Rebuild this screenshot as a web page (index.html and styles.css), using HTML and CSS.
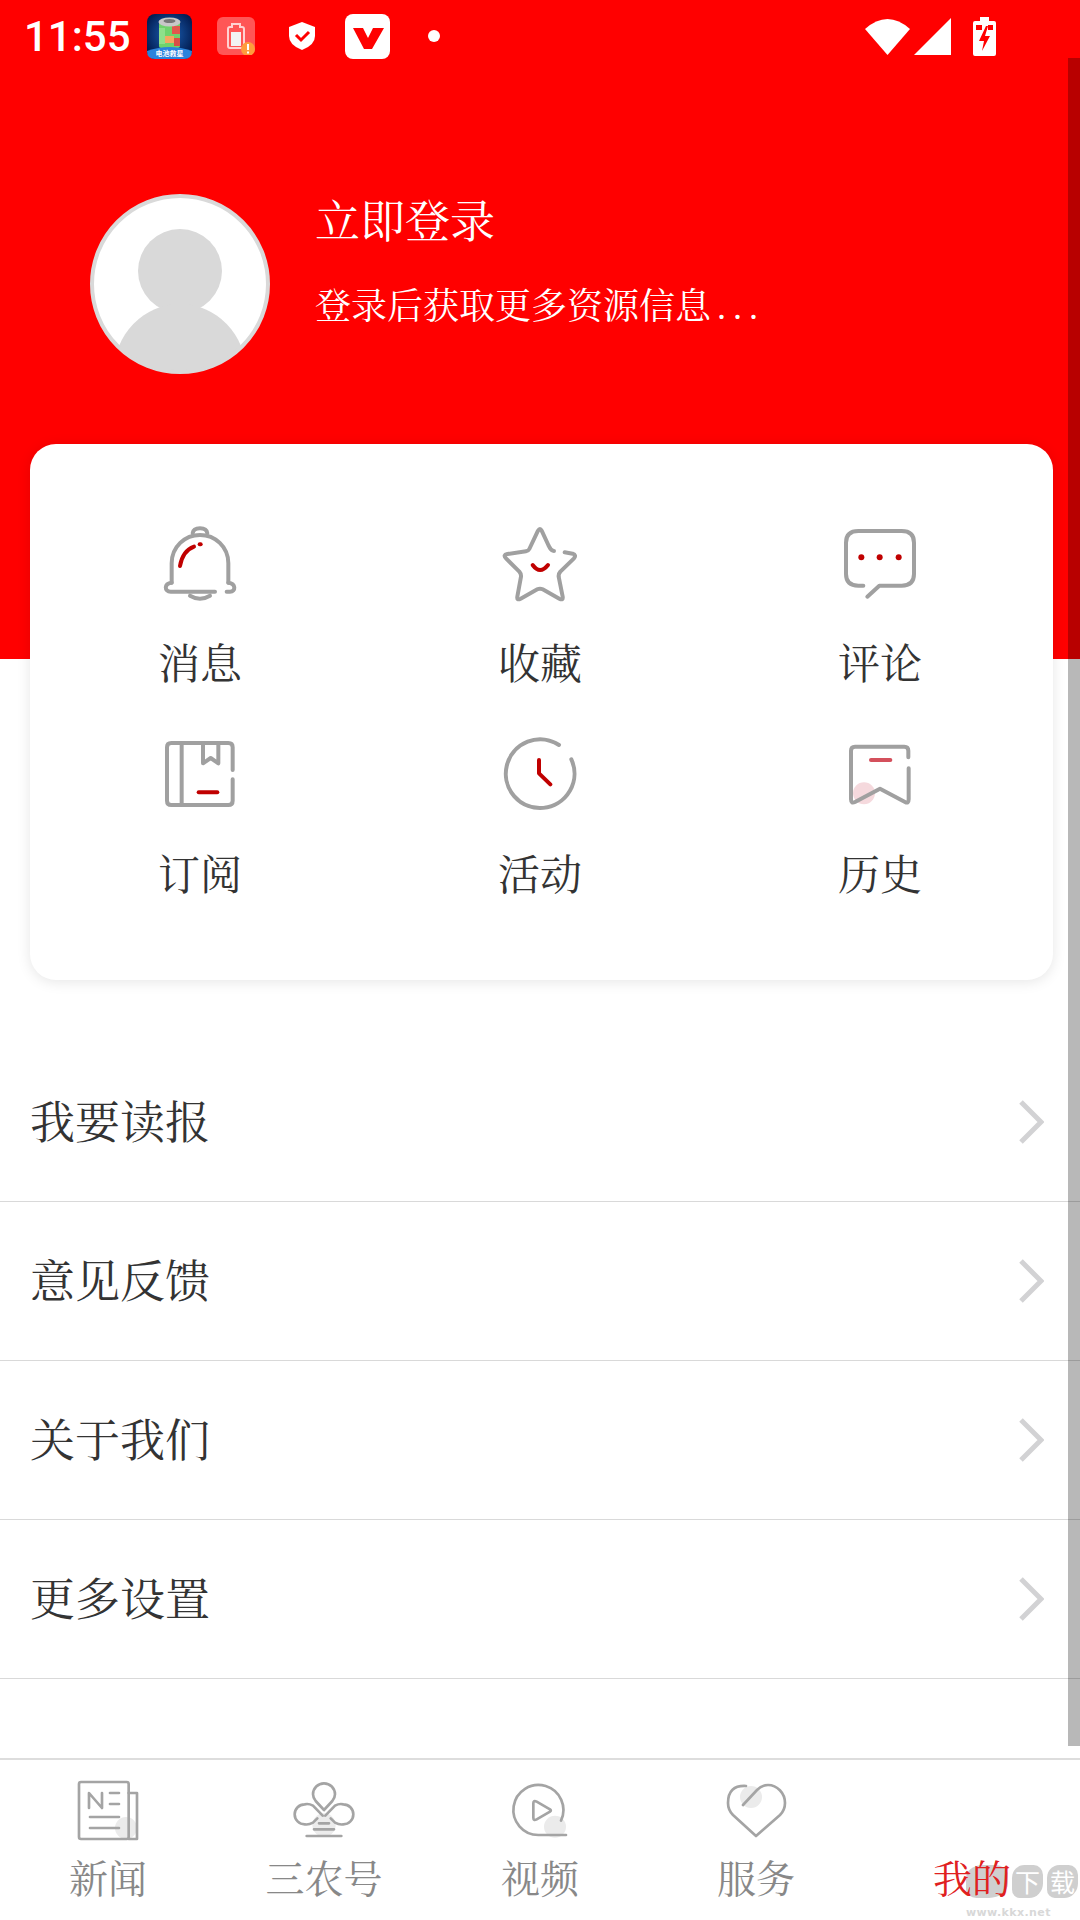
FILE: index.html
```html
<!DOCTYPE html>
<html lang="zh-CN">
<head>
  <meta charset="UTF-8">
  <meta name="viewport" content="width=device-width, initial-scale=1.0">
  <title>我的</title>
  <link rel="stylesheet" href="styles.css">
</head>
<body>
  <div class="page">
    <div class="header">
      <div class="status-bar">
        <span class="time">11:55</span>
        <svg class="st-app" viewBox="0 0 45 45">
          <defs>
            <radialGradient id="appbg" cx="50%" cy="45%" r="60%">
              <stop offset="0" stop-color="#1b62b8"/>
              <stop offset="1" stop-color="#021a4e"/>
            </radialGradient>
          </defs>
          <rect width="45" height="45" rx="8" fill="url(#appbg)"/>
          <rect x="12" y="8" width="21" height="26" rx="2" fill="#6fd36c"/>
          <rect x="25" y="12" width="8" height="8" fill="#e2574c"/>
          <rect x="18" y="22" width="9" height="7" fill="#f4a860"/>
          <rect x="12" y="14" width="6" height="16" fill="#8fe08a"/>
          <rect x="27" y="24" width="6" height="8" fill="#d94f45"/>
          <ellipse cx="22.5" cy="8" rx="11" ry="4.5" fill="#c8c8c8"/>
          <ellipse cx="22.5" cy="7" rx="6" ry="2" fill="#777"/>
          <path d="M0 37 Q22.5 29 45 37 Q45 45 37 45 H8 Q0 45 0 37Z" fill="#2b83dc"/>
          <text x="22.5" y="41.5" class="app-text">电池救星</text>
        </svg>
        <svg class="st-warn" viewBox="0 0 38 38">
          <rect width="38" height="38" rx="6" fill="#ff5656"/>
          <path d="M15 7 V10 H13 Q11 10 11 12 V29 Q11 31 13 31 H25 Q27 31 27 29 V12 Q27 10 25 10 H23 V7Z" fill="none" stroke="#ffd2d2" stroke-width="2"/>
          <rect x="14" y="15" width="10" height="14" fill="#f2f2f2"/>
          <circle cx="31" cy="32" r="7" fill="#ff9c3c"/>
          <rect x="30" y="27" width="2" height="6" fill="#fff"/>
          <rect x="30" y="34.500" width="2" height="2" fill="#fff"/>
        </svg>
        <svg class="st-shield" viewBox="0 0 26 28">
          <path d="M13 0 L26 5 V14 Q26 23 13 28 Q0 23 0 14 V5Z" fill="#fff"/>
          <path d="M7 13 L12 18 L20 10" fill="none" stroke="#f00" stroke-width="3"/>
        </svg>
        <svg class="st-vlogo" viewBox="0 0 45 45">
          <rect width="45" height="45" rx="8" fill="#fff"/>
          <path d="M8 14 H18 L23 24 L28 14 H39 L27 35 H19Z" fill="#f00"/>
        </svg>
        <span class="st-dot"></span>
        <div class="status-right">
          <svg class="st-wifi" viewBox="0 0 45 38">
            <path d="M0 12 Q22.500 -8 45 12 L22.500 38Z" fill="#fff"/>
          </svg>
          <svg class="st-signal" viewBox="0 0 37 37">
            <path d="M37 0 V37 H0Z" fill="#fff"/>
          </svg>
          <svg class="st-battery" viewBox="0 0 23 39">
            <path d="M7 0 H16 V4 H21 Q23 4 23 6 V37 Q23 39 21 39 H2 Q0 39 0 37 V6 Q0 4 2 4 H7Z" fill="#fff"/>
            <path d="M13 9 L6 24 H11 L9 34 L17 19 H12 L15 9Z" fill="#f00"/>
            <rect x="3" y="8" width="6" height="5" fill="#f00"/>
            <rect x="15" y="8" width="5" height="5" fill="#f00"/>
          </svg>
        </div>
      </div>
      <div class="profile">
        <svg class="avatar" viewBox="0 0 180 180">
          <defs>
            <clipPath id="avaclip"><circle cx="90" cy="90" r="88"/></clipPath>
          </defs>
          <circle cx="90" cy="90" r="88" fill="#fff"/>
          <g clip-path="url(#avaclip)" fill="#d9d9d9">
            <circle cx="90" cy="77" r="42"/>
            <ellipse cx="90" cy="178" rx="66" ry="68"/>
          </g>
          <circle cx="90" cy="90" r="88" fill="none" stroke="#d9d9d9" stroke-width="4"/>
        </svg>
        <div class="profile-text">
          <div class="login-title">立即登录</div>
          <div class="login-sub">登录后获取更多资源信息<span class="dots">...</span></div>
        </div>
      </div>
    </div>

    <div class="card">
      <div class="cell">
        <svg class="cell-icon" viewBox="180 75 240 240">
          <g class="ln">
            <path d="M278 100 Q280 85 300 85 Q320 85 322 100"/>
            <path d="M215 248 V190 C215 140 255 105 300 105 C345 105 385 140 385 190 V248"/>
            <path d="M345 275 H212 C192 275 192 250 215 248"/>
            <path d="M380 275 H390 C408 275 408 250 385 248"/>
            <path d="M270 287 Q300 305 330 287"/>
          </g>
          <g class="ln-red">
            <path d="M240 198 C245 170 260 148 282 140"/>
            <path d="M299 133 H302"/>
          </g>
        </svg>
        <div class="cell-label">消息</div>
      </div>
      <div class="cell">
        <svg class="cell-icon" viewBox="1200 75 240 240">
          <path class="ln" d="M1362 153 C1352 153 1350 145 1345 135 L1325 92 Q1320 82 1314 92 L1288 147 Q1285 153 1278 154 L1222 162 Q1208 165 1218 175 L1258 215 Q1264 222 1263 230 L1252 290 Q1250 302 1262 296 L1312 268 Q1320 264 1328 268 L1378 296 Q1390 302 1388 290 L1376 230 Q1375 222 1381 215 L1422 175 Q1430 165 1418 161 L1394 157"/>
          <path class="ln-red" d="M1298 195 Q1320 225 1344 195"/>
        </svg>
        <div class="cell-label">收藏</div>
      </div>
      <div class="cell">
        <svg class="cell-icon" viewBox="780 75 240 240">
          <path class="ln" d="M850 257 H835 Q798 257 798 222 V128 Q798 93 835 93 H965 Q1002 93 1002 128 V222 Q1002 257 965 257 H898 L862 290"/>
          <g class="dot-red">
            <circle cx="844" cy="172" r="9"/>
            <circle cx="899" cy="172" r="9"/>
            <circle cx="956" cy="172" r="9"/>
          </g>
        </svg>
        <div class="cell-label">评论</div>
      </div>
      <div class="cell">
        <svg class="cell-icon" viewBox="180 708 240 240">
          <g class="ln">
            <path d="M398 810 V742 Q398 729 385 729 H214 Q201 729 201 742 V902 Q201 915 214 915 H385 Q398 915 398 902 V838"/>
            <path d="M245 729 V915"/>
            <path d="M309 729 V790 L332 774 L355 790 V729"/>
          </g>
          <path class="ln-red" d="M296 877 H352"/>
        </svg>
        <div class="cell-label">订阅</div>
      </div>
      <div class="cell">
        <svg class="cell-icon" viewBox="1203 708 240 240">
          <path class="ln" d="M1380 735 A103 103 0 1 0 1417 778"/>
          <path class="ln-red" d="M1320 780 V820 L1354 853"/>
        </svg>
        <div class="cell-label">活动</div>
      </div>
      <div class="cell">
        <svg class="cell-icon" viewBox="780 708 240 240">
          <circle cx="852" cy="880" r="33" fill="#f5d9dd"/>
          <path class="ln" d="M985 772 V752 Q985 740 973 740 H825 Q813 740 813 752 V898 Q813 912 825 906 L900 866 L975 906 Q986 912 986 898 V805"/>
          <path class="ln-red ln-soft" d="M873 780 H931"/>
        </svg>
        <div class="cell-label">历史</div>
      </div>
    </div>

    <div class="menu">
      <div class="menu-row">
        <span class="menu-text">我要读报</span>
        <svg class="chevron" viewBox="0 0 26 44"><path d="M3 2 L23 22 L3 42"/></svg>
      </div>
      <div class="menu-row">
        <span class="menu-text">意见反馈</span>
        <svg class="chevron" viewBox="0 0 26 44"><path d="M3 2 L23 22 L3 42"/></svg>
      </div>
      <div class="menu-row">
        <span class="menu-text">关于我们</span>
        <svg class="chevron" viewBox="0 0 26 44"><path d="M3 2 L23 22 L3 42"/></svg>
      </div>
      <div class="menu-row">
        <span class="menu-text">更多设置</span>
        <svg class="chevron" viewBox="0 0 26 44"><path d="M3 2 L23 22 L3 42"/></svg>
      </div>
    </div>

    <div class="tabbar">
      <div class="tab">
        <svg class="tab-icon" viewBox="0 0 270 210">
          <circle cx="189" cy="159" r="33" fill="#ebebeb"/>
          <g class="tab-ln">
            <path d="M197 54 H222 V192 H197"/>
            <rect x="48" y="21" width="149" height="171" rx="6"/>
            <path d="M78 99 V54 L117 99 V54"/>
            <path d="M141 54 H168 M141 87 H168 M81 126 H168 M81 159 H168"/>
          </g>
        </svg>
        <div class="tab-label">新闻</div>
      </div>
      <div class="tab">
        <svg class="tab-icon" viewBox="-5 0 270 210">
          <circle cx="130" cy="150" r="35" fill="#ececec"/>
          <g class="tab-ln">
            <path d="M130 105 L105 78 Q97 68 97 58 A33 33 0 0 1 163 58 Q163 68 155 78Z"/>
            <path d="M126 122 L97 92 Q84 85 72 88 A30 30 0 0 0 72 148 Q84 150 97 143 L110 130"/>
            <path d="M134 122 L163 92 Q176 85 188 88 A30 30 0 0 1 188 148 Q176 150 163 143 L150 130"/>
            <path d="M115 145 H145 M100 163 H160 M78 183 H182"/>
          </g>
        </svg>
        <div class="tab-label">三农号</div>
      </div>
      <div class="tab">
        <svg class="tab-icon" viewBox="-15 0 270 210">
          <circle cx="165" cy="155" r="33" fill="#ebebeb"/>
          <g class="tab-ln">
            <path d="M198 180 H115 A75 75 0 1 1 183 137"/>
            <path d="M100 85 Q100 75 110 80 L150 103 Q155 107 150 110 L110 133 Q100 138 100 128Z"/>
          </g>
        </svg>
        <div class="tab-label">视频</div>
      </div>
      <div class="tab">
        <svg class="tab-icon" viewBox="0 0 270 210">
          <circle cx="120" cy="66" r="33" fill="#ebebeb"/>
          <path class="tab-ln" d="M105 33 Q51 30 51 84 Q51 105 66 120 L135 183 L207 120 Q222 105 222 84 C222 54 198 30 171 30 C156 30 147 36 138 45 L96 90"/>
        </svg>
        <div class="tab-label">服务</div>
      </div>
      <div class="tab active">
        <div class="tab-icon"></div>
        <div class="tab-label">我的</div>
      </div>
    </div>

    <div class="scrollbar"></div>

    <div class="watermark">
      <div class="wm-blobs">
        <span class="wm-blob wm-wide"></span>
        <span class="wm-blob">下</span>
        <span class="wm-blob">载</span>
      </div>
      <div class="wm-url">www.kkx.net</div>
    </div>
  </div>
</body>
</html>
```

FILE: styles.css
```css
* {
  box-sizing: border-box;
}
html, body {
  margin: 0;
  padding: 0;
}
body {
  font-family: "Liberation Serif", "Noto Serif CJK SC", "Noto Sans CJK SC", serif;
  background: #fff;
}
.page {
  position: relative;
  display: flex;
  flex-direction: column;
  width: 1080px;
  height: 1920px;
  overflow: hidden;
  background: #fff;
}

/* top red block */
.header {
  height: 659px;
  background: #f00;
  flex-shrink: 0;
}
.status-bar {
  display: flex;
  align-items: center;
  height: 72px;
  padding-left: 24px;
  padding-right: 84px;
}
.time {
  font-family: Roboto, sans-serif;
  font-size: 42px;
  font-weight: 500;
  color: #fff;
  width: 123px;
}
.st-app {
  width: 45px;
  height: 45px;
  margin-right: 25px;
}
.app-text {
  font-family: "Noto Sans CJK SC", sans-serif;
  font-size: 7px;
  font-weight: 700;
  fill: #fff;
  text-anchor: middle;
}
.st-warn {
  width: 38px;
  height: 38px;
  margin-right: 34px;
}
.st-shield {
  width: 26px;
  height: 28px;
  margin-right: 30px;
}
.st-vlogo {
  width: 45px;
  height: 45px;
  margin-right: 38px;
}
.st-dot {
  width: 12px;
  height: 12px;
  border-radius: 50%;
  background: #fff;
}
.status-right {
  display: flex;
  align-items: center;
  margin-left: auto;
}
.st-wifi {
  width: 45px;
  height: 38px;
  margin-right: 4px;
}
.st-signal {
  width: 37px;
  height: 37px;
  margin-right: 22px;
}
.st-battery {
  width: 23px;
  height: 39px;
}

.profile {
  display: flex;
  margin-top: 122px;
  padding-left: 90px;
}
.avatar {
  width: 180px;
  height: 180px;
  flex-shrink: 0;
}
.profile-text {
  margin-left: 45px;
  padding-top: 2px;
  color: #fff;
}
.login-title {
  font-size: 45px;
  line-height: 54px;
}
.login-sub {
  margin-top: 35px;
  font-size: 36px;
  line-height: 44px;
}
.dots {
  margin-left: 6px;
  letter-spacing: 7px;
}

/* shortcuts card */
.card {
  position: relative;
  display: grid;
  grid-template-columns: repeat(3, 340px);
  align-content: start;
  row-gap: 46px;
  width: 1023px;
  height: 536px;
  margin: -215px 0 0 30px;
  padding-top: 81px;
  border-radius: 26px;
  background: #fff;
  box-shadow: 0 2px 14px rgba(0, 0, 0, 0.1);
  flex-shrink: 0;
}
.cell {
  display: flex;
  flex-direction: column;
  align-items: center;
}
.cell-icon {
  width: 80px;
  height: 80px;
  margin-bottom: 35px;
}
.cell-label {
  font-size: 42px;
  line-height: 50px;
  color: #333;
}
.ln, .ln path {
  fill: none;
  stroke: #a0a0a0;
  stroke-width: 12;
  stroke-linecap: round;
  stroke-linejoin: round;
}
.ln-red, .ln-red path {
  fill: none;
  stroke: #c00000;
  stroke-width: 12;
  stroke-linecap: round;
  stroke-linejoin: round;
}
.ln-soft {
  stroke: #d4505c;
}
.dot-red {
  fill: #c00000;
}

/* list */
.menu {
  margin-top: 63px;
}
.menu-row {
  display: flex;
  align-items: center;
  justify-content: space-between;
  height: 159px;
  padding: 0 36px 0 30px;
  border-bottom: 1px solid #d9d9d9;
  font-size: 45px;
  color: #333;
}
.menu-text {
  padding-bottom: 6px;
}
.chevron {
  width: 26px;
  height: 44px;
}
.chevron path {
  fill: none;
  stroke: #d2d2d4;
  stroke-width: 5;
}

/* bottom nav */
.tabbar {
  display: flex;
  margin-top: auto;
  height: 162px;
  padding-top: 15px;
  border-top: 2px solid #ddd;
}
.tab {
  display: flex;
  flex-direction: column;
  align-items: center;
  width: 216px;
}
.tab-icon {
  width: 90px;
  height: 70px;
  margin-bottom: 12px;
}
.tab-ln, .tab-ln path, .tab-ln rect {
  fill: none;
  stroke: #a4a4a4;
  stroke-width: 8;
  stroke-linecap: round;
  stroke-linejoin: round;
}
.tab-label {
  font-size: 39px;
  line-height: 46px;
  color: #888;
}
.tab.active {
  position: relative;
  z-index: 2;
}
.tab.active .tab-label {
  color: #e02020;
}

/* things lying over the page */
.scrollbar {
  position: absolute;
  top: 58px;
  right: 0;
  width: 12px;
  height: 1688px;
  background: rgba(0, 0, 0, 0.28);
}
.watermark {
  position: absolute;
  right: 2px;
  bottom: 1px;
  width: 112px;
  pointer-events: none;
}
.wm-blobs {
  display: flex;
  gap: 4px;
}
.wm-blob {
  width: 31px;
  height: 33px;
  border-radius: 40% 30% 45% 25%;
  background: #cfcfcf;
  font-family: "Noto Sans CJK SC", sans-serif;
  font-size: 25px;
  line-height: 32px;
  text-align: center;
  color: #fff;
}
.wm-wide {
  width: 42px;
}
.wm-url {
  margin-top: 8px;
  font-family: "DejaVu Sans", sans-serif;
  font-size: 11px;
  font-weight: 700;
  letter-spacing: 0.4px;
  color: #d8d8d8;
}
```
